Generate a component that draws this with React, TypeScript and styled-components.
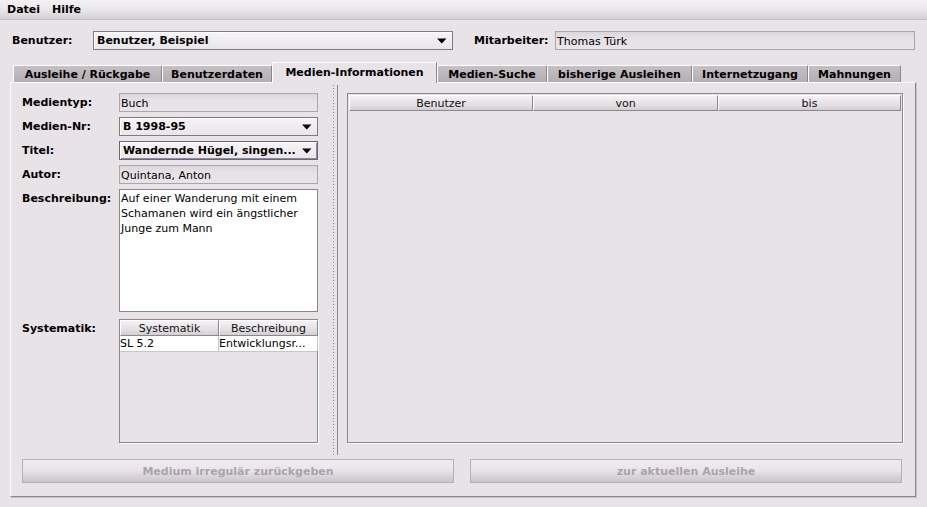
import React from "react";
import styled, { createGlobalStyle } from "styled-components";

const BG = "#e7e3e7";
const DARK = "#8a888a";

const Global = createGlobalStyle`
  html, body { margin: 0; padding: 0; background: ${BG}; }
  body { width: 927px; height: 507px; overflow: hidden; font-family: "DejaVu Sans", "Liberation Sans", sans-serif; font-size: 11px; color: #000; }
  * { box-sizing: border-box; }
`;

const Frame = styled.div`
  width: 927px;
  height: 507px;
  display: flex;
  flex-direction: column;
  background: ${BG};
`;

const MenuBar = styled.div`
  height: 20px;
  display: flex;
  align-items: center;
  padding-left: 1px;
  background: linear-gradient(#f3f1f3 0%, #e9e6e9 55%, #d3cfd3 100%);
  border-bottom: 1px solid #c4c0c4;
`;

const MenuItem = styled.span`
  padding: 0 6px;
  font-weight: bold;
  font-size: 11px;
`;

const TopRow = styled.div`
  display: flex;
  align-items: center;
  padding: 11px 0 0 12px;
`;

const TopLabel = styled.span<{ $w: number; $ml?: number }>`
  width: ${(p) => p.$w}px;
  margin-left: ${(p) => p.$ml ?? 0}px;
  font-weight: bold;
`;

const Combo = styled.div<{ $w: number; $focus?: boolean }>`
  width: ${(p) => p.$w}px;
  height: 19px;
  display: flex;
  align-items: center;
  justify-content: space-between;
  padding: 0 5px 0 3px;
  border: 1px solid ${(p) => (p.$focus ? "#6a6878" : "#7e7c7e")};
  box-shadow: inset 1px 1px 0 #fff${(p) => (p.$focus ? ", inset -1px -1px 0 #8a889a" : "")};
  background: linear-gradient(#f6f4f6, #e9e6e9);
  font-weight: bold;
  white-space: nowrap;
  overflow: hidden;
`;

const Arrow = () => (
  <svg width="10" height="6" viewBox="0 0 10 6">
    <path d="M0 0.5H9.5L4.75 5.5Z" fill="#000" />
  </svg>
);

const Field = styled.div<{ $w?: number }>`
  width: ${(p) => (p.$w ? `${p.$w}px` : "auto")};
  height: 19px;
  display: flex;
  align-items: center;
  padding-left: 1px;
  padding-top: 1px;
  border: 1px solid #a9a7a9;
  background: linear-gradient(#d9d5d9 0px, #e4e0e4 5px, ${BG} 12px);
  white-space: nowrap;
`;

const TabRow = styled.div`
  display: flex;
  align-items: flex-end;
  height: 20px;
  margin-top: 12px;
  padding-left: 13px;
`;

const Tab = styled.div<{ $w: number; $active?: boolean }>`
  width: ${(p) => p.$w}px;
  height: ${(p) => (p.$active ? 21 : 17)}px;
  margin-bottom: ${(p) => (p.$active ? -1 : 0)}px;
  position: relative;
  z-index: ${(p) => (p.$active ? 2 : 1)};
  display: flex;
  align-items: center;
  justify-content: center;
  padding-bottom: ${(p) => (p.$active ? 2 : 0)}px;
  font-weight: bold;
  white-space: nowrap;
  border-top: 1px solid #fff;
  border-left: 1px solid #fff;
  border-right: 1px solid ${DARK};
  background: ${(p) => (p.$active ? BG : "linear-gradient(#c4c0c4, #b2aeb2)")};
`;

const Panel = styled.div`
  margin-left: 10px;
  width: 906px;
  height: 415px;
  border-top: 1px solid #fff;
  border-left: 1px solid #fff;
  border-right: 1px solid ${DARK};
  border-bottom: 1px solid ${DARK};
  box-shadow: 1px 1px 0 #c8c4c8;
  padding: 2px 12px 0 11px;
  display: flex;
  flex-direction: column;
`;

const Split = styled.div`
  display: flex;
  height: 370px;
`;

const LeftPane = styled.div`
  width: 308px;
  padding-top: 8px;
`;

const Form = styled.div`
  display: grid;
  grid-template-columns: 97px 199px;
  grid-template-rows: 19px 19px 19px 19px 123px 124px;
  row-gap: 5px;
`;

const FormLabel = styled.div<{ $gapTop?: number }>`
  font-weight: bold;
  line-height: 17px;
  padding-top: 1px;
  margin-top: ${(p) => p.$gapTop ?? 0}px;
  white-space: nowrap;
`;

const TextArea = styled.div`
  background: #fff;
  border: 1px solid ${DARK};
  padding: 1px 1px;
  line-height: 15px;
  white-space: pre;
`;

const Divider = styled.div`
  width: 7px;
  display: flex;
  justify-content: center;
`;

const Dots = styled.div`
  width: 1px;
  height: 100%;
  background-image: repeating-linear-gradient(to bottom, #8a888a 0px, #8a888a 1px, transparent 1px, transparent 3px);
`;

const RightPane = styled.div`
  flex: 1;
  border-left: 1px solid ${DARK};
  padding: 8px 0 0 9px;
`;

const TableBox = styled.div<{ $h: number; $inset: number; $mt?: number }>`
  height: ${(p) => p.$h}px;
  margin-top: ${(p) => p.$mt ?? 0}px;
  border: 1px solid ${DARK};
  box-shadow: 1px 1px 0 #fff;
  padding: ${(p) => p.$inset}px;
  display: flex;
  flex-direction: column;
`;

const HeaderRow = styled.div<{ $cols: string }>`
  display: grid;
  grid-template-columns: ${(p) => p.$cols};
  height: 16px;
`;

const HeaderCell = styled.div`
  display: flex;
  align-items: center;
  justify-content: center;
  border-left: 1px solid #fff;
  border-top: 1px solid #fff;
  border-right: 1px solid ${DARK};
  border-bottom: 1px solid ${DARK};
  background: linear-gradient(#f4f2f4, #e4e0e4 60%, #d2ced2);
  color: #111;
  white-space: nowrap;
`;

const BodyRow = styled.div<{ $cols: string }>`
  display: grid;
  grid-template-columns: ${(p) => p.$cols};
  height: 16px;
  background: #fff;
  border-bottom: 1px solid #c8c6c8;
`;

const BodyCell = styled.div`
  display: flex;
  align-items: center;
  border-right: 1px solid #c8c6c8;
  white-space: nowrap;
  overflow: hidden;
`;

const ButtonRow = styled.div`
  display: grid;
  grid-template-columns: 432px 432px;
  column-gap: 16px;
  margin-top: 4px;
`;

const Button = styled.div`
  height: 24px;
  display: flex;
  align-items: center;
  justify-content: center;
  border: 1px solid #b4b0b4;
  background: linear-gradient(#efecf0 0%, #e9e5ea 45%, #c9c5ca 100%);
  color: #a9a5a9;
  font-weight: bold;
  white-space: nowrap;
`;

const tabs = [
  { t: "Ausleihe / Rückgabe", w: 149 },
  { t: "Benutzerdaten", w: 110 },
  { t: "Medien-Informationen", w: 165, a: true },
  { t: "Medien-Suche", w: 110 },
  { t: "bisherige Ausleihen", w: 145 },
  { t: "Internetzugang", w: 116 },
  { t: "Mahnungen", w: 93 },
];

export default function App() {
  return (
    <Frame>
      <Global />
      <MenuBar>
        <MenuItem>Datei</MenuItem>
        <MenuItem>Hilfe</MenuItem>
      </MenuBar>
      <TopRow>
        <TopLabel $w={81}>Benutzer:</TopLabel>
        <Combo $w={360}>
          <span>Benutzer, Beispiel</span>
          <Arrow />
        </Combo>
        <TopLabel $w={81} $ml={21}>Mitarbeiter:</TopLabel>
        <Field $w={360}>Thomas Türk</Field>
      </TopRow>
      <TabRow>
        {tabs.map((t) => (
          <Tab key={t.t} $w={t.w} $active={t.a}>
            {t.t}
          </Tab>
        ))}
      </TabRow>
      <Panel>
        <Split>
          <LeftPane>
            <Form>
              <FormLabel>Medientyp:</FormLabel>
              <Field>Buch</Field>
              <FormLabel>Medien-Nr:</FormLabel>
              <Combo $w={199}>
                <span>B 1998-95</span>
                <Arrow />
              </Combo>
              <FormLabel>Titel:</FormLabel>
              <Combo $w={199} $focus>
                <span>Wandernde Hügel, singen...</span>
                <Arrow />
              </Combo>
              <FormLabel>Autor:</FormLabel>
              <Field>Quintana, Anton</Field>
              <FormLabel>Beschreibung:</FormLabel>
              <TextArea>
                {"Auf einer Wanderung mit einem\nSchamanen wird ein ängstlicher\nJunge zum Mann"}
              </TextArea>
              <FormLabel $gapTop={2}>Systematik:</FormLabel>
              <TableBox $h={124} $inset={0} $mt={2}>
                <HeaderRow $cols="99px 99px">
                  <HeaderCell>Systematik</HeaderCell>
                  <HeaderCell>Beschreibung</HeaderCell>
                </HeaderRow>
                <BodyRow $cols="99px 99px">
                  <BodyCell>SL 5.2</BodyCell>
                  <BodyCell>Entwicklungsr...</BodyCell>
                </BodyRow>
              </TableBox>
            </Form>
          </LeftPane>
          <Divider>
            <Dots />
          </Divider>
          <RightPane>
            <TableBox $h={350} $inset={1}>
              <HeaderRow $cols="184px 185px 1fr">
                <HeaderCell>Benutzer</HeaderCell>
                <HeaderCell>von</HeaderCell>
                <HeaderCell>bis</HeaderCell>
              </HeaderRow>
            </TableBox>
          </RightPane>
        </Split>
        <ButtonRow>
          <Button>Medium irregulär zurückgeben</Button>
          <Button>zur aktuellen Ausleihe</Button>
        </ButtonRow>
      </Panel>
    </Frame>
  );
}
